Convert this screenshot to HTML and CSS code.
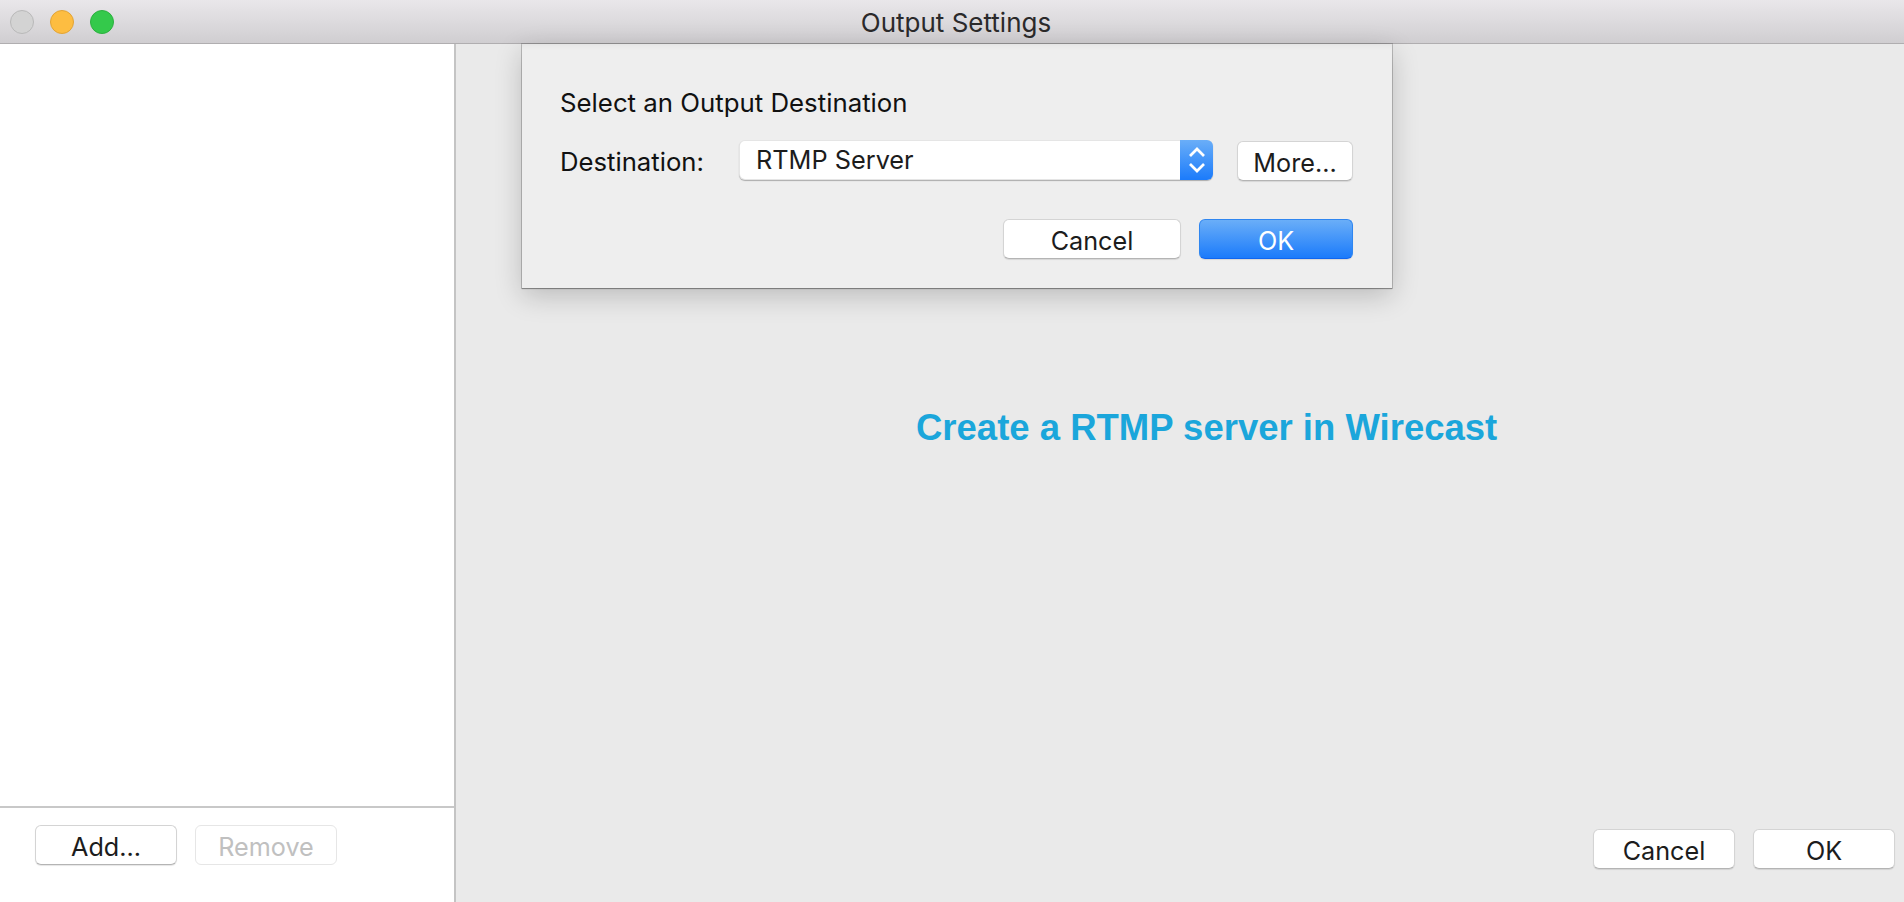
FILE: index.html
```html
<!DOCTYPE html>
<html lang="en">
<head>
<meta charset="utf-8">
<title>Output Settings</title>
<link rel="stylesheet" href="styles.css">
</head>
<body>
<div class="window">
  <header class="titlebar">
    <div class="lights">
      <span class="light light-close"></span>
      <span class="light light-min"></span>
      <span class="light light-max"></span>
    </div>
    <div class="title">Output Settings</div>
  </header>
  <div class="content">
    <aside class="sidebar">
      <div class="list"></div>
      <div class="sidebar-actions">
        <button class="btn btn-side">Add...</button>
        <button class="btn btn-side btn-disabled">Remove</button>
      </div>
    </aside>
    <main class="main">
      <h1 class="heading">Create a RTMP server in Wirecast</h1>
      <div class="main-actions">
        <button class="btn btn-side">Cancel</button>
        <button class="btn btn-side">OK</button>
      </div>
    </main>
  </div>
  <section class="sheet">
    <div class="sheet-title">Select an Output Destination</div>
    <div class="sheet-row">
      <span class="sheet-label">Destination:</span>
      <div class="select">
        <span class="select-value">RTMP Server</span>
        <span class="select-arrows">
          <svg width="16" height="26" viewBox="0 0 16 26" fill="none" stroke="#fff" stroke-width="2.7">
            <path d="M1 9 8 2 15 9"/>
            <path d="M1 17 8 24 15 17"/>
          </svg>
        </span>
      </div>
      <button class="btn btn-more">More...</button>
    </div>
    <div class="sheet-actions">
      <button class="btn btn-cancel">Cancel</button>
      <button class="btn btn-primary">OK</button>
    </div>
  </section>
</div>
</body>
</html>
```
FILE: styles.css
```css
* { box-sizing: border-box; }
html, body { height: 100%; margin: 0; }
body { font-family: "Inter", "Liberation Sans", sans-serif; color: #1c1c1c; overflow: hidden; }

.window { position: relative; display: flex; flex-direction: column; width: 1904px; height: 902px; background: #eaeaea; }

.titlebar { position: relative; flex: none; display: flex; align-items: center; justify-content: center; height: 44px; padding: 2px 0 0 8px; background: linear-gradient(#e9e7ea, #d0ced1); border-bottom: 1px solid #b0aeb0; }
.lights { position: absolute; left: 10px; top: 10px; display: flex; gap: 16px; }
.light { width: 24px; height: 24px; border-radius: 50%; border: 1px solid; }
.light-close { background: #d3d3d3; border-color: #b9b9b9; }
.light-min { background: #fdbd41; border-color: #e2a436; }
.light-max { background: #34c94b; border-color: #2cb03f; }
.title { font-size: 26px; color: #2b2a2b; }

.content { flex: 1; display: flex; min-height: 0; }
.sidebar { flex: none; width: 456px; display: flex; flex-direction: column; background: #fff; border-right: 2px solid #c4c4c4; }
.list { flex: 1; border-bottom: 2px solid #c8c8c8; }
.sidebar-actions { flex: none; height: 94px; padding: 17px 0 0 35px; display: flex; align-items: flex-start; gap: 18px; }

.main { flex: 1; display: flex; flex-direction: column; min-width: 0; }
.heading { margin: 362px 0 0 460px; font: bold 36.5px "Liberation Sans", Arial, sans-serif; line-height: 44px; color: #1ba6db; }
.main-actions { margin-top: auto; padding: 0 9px 33px 0; display: flex; justify-content: flex-end; gap: 18px; }

.btn { display: block; height: 40px; padding: 4px 0 0; background: #fff; border: 1px solid #d4d4d4; border-bottom-color: #b4b4b4; border-radius: 6px; box-shadow: 0 1px 1px rgba(0,0,0,.1); font: 25.2px "Inter", "Liberation Sans", sans-serif; color: #1c1c1c; text-align: center; }
.btn-side { width: 142px; }
.btn-disabled { color: #c0c0c0; border-color: #e6e6e6; box-shadow: none; }

.sheet { position: absolute; left: 522px; top: 44px; width: 870px; height: 244px; padding: 43px 38px 0; background: #eee; box-shadow: 0 0 0 1px rgba(0,0,0,.17), 0 1px 1px rgba(0,0,0,.25), 0 8px 26px rgba(0,0,0,.2), inset 0 7px 7px -7px rgba(0,0,0,.08); }
.sheet-title { font-size: 25.8px; line-height: 32px; color: #111; }
.sheet-row { display: flex; align-items: center; margin-top: 20px; }
.sheet-label { width: 179px; flex: none; font-size: 25.7px; color: #111; padding-top: 3px; }
.select { flex: none; width: 474px; height: 40px; display: flex; align-items: stretch; background: #fff; border-radius: 6px; box-shadow: 0 1px 1px rgba(0,0,0,.28), inset 0 0 0 1px rgba(0,0,0,.1); }
.select-value { flex: 1; padding-left: 17px; font-size: 25.3px; line-height: 40px; color: #1c1c1c; }
.select-arrows { flex: none; width: 33px; display: flex; align-items: center; justify-content: center; background: linear-gradient(#6aaef8, #1b7bfb); border-radius: 0 6px 6px 0; }
.btn-more { width: 116px; margin-left: 24px; margin-top: 2px; }
.sheet-actions { display: flex; justify-content: flex-end; gap: 18px; margin-top: 38px; margin-right: 1px; }
.btn-cancel { width: 178px; }
.btn-primary { width: 154px; background: linear-gradient(#6aaef8, #1b7bfb); border: 1px solid #2f86f0; border-bottom-color: #1066f0; color: #fff; }
```
